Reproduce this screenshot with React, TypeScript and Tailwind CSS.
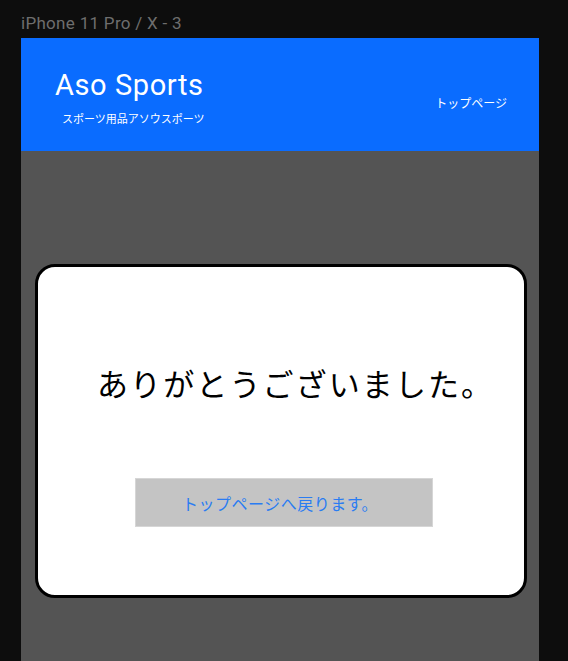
export default function App() {
  return (
    <div
      className="min-h-[661px] w-[568px] bg-[#0d0d0d] overflow-hidden"
      style={{ fontFamily: 'Roboto, "Noto Sans CJK JP", sans-serif' }}
    >
      {/* artboard label */}
      <div className="h-[38px] pl-[21px] pt-[13px] text-[17px] leading-[21px] tracking-[0.3px] text-[#6e6e6e]">
        iPhone 11 Pro / X - 3
      </div>

      <div className="ml-[21px] w-[518px] h-[623px] bg-[#545454]">
        {/* header */}
        <header className="h-[113px] bg-[#0a6cff] flex justify-between text-white">
          <div className="pl-[34px] pt-[29px]">
            <div className="text-[29px] leading-[36px] tracking-[0.6px]">Aso Sports</div>
            <div
              className="pl-[7px] pt-[8px] text-[11px] leading-[14px]"
              style={{ fontFamily: '"Noto Sans CJK JP", sans-serif' }}
            >
              スポーツ用品アソウスポーツ
            </div>
          </div>
          <div
            className="pr-[32px] pt-[57px] text-[12px] leading-[16px]"
            style={{ fontFamily: '"Noto Sans CJK JP", sans-serif' }}
          >
            トップページ
          </div>
        </header>

        {/* thank-you dialog */}
        <div
          className="ml-[14px] mt-[113px] w-[492px] h-[334px] bg-white border-[3px] border-black rounded-[20px] flex flex-col items-start pl-[59px]"
          style={{ fontFamily: '"Noto Sans CJK JP", sans-serif' }}
        >
          <h1 className="pt-[92px] text-[31px] leading-[48px] tracking-[2.1px] text-black">
            ありがとうございました。
          </h1>
          <button className="ml-[38px] mt-[71px] w-[298px] h-[49px] pr-[8px] bg-[#c4c4c4] border border-[#d6d6d6] text-[16px] tracking-[0.5px] text-[#2a7cf2]">
            トップページへ戻ります。
          </button>
        </div>
      </div>
    </div>
  )
}
